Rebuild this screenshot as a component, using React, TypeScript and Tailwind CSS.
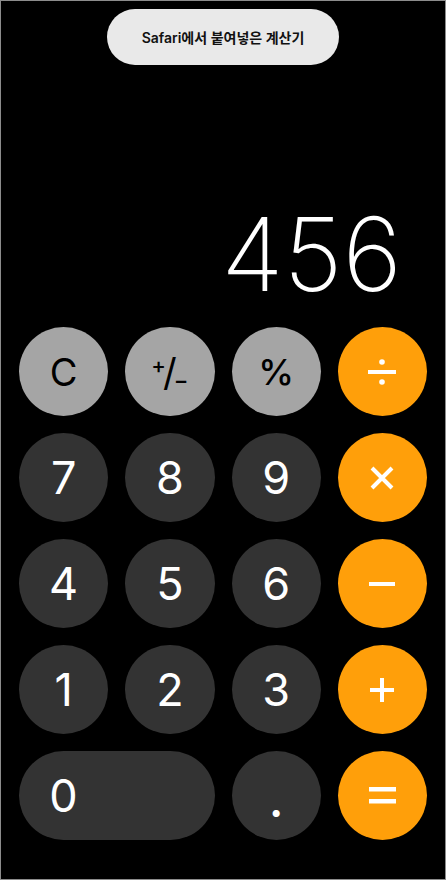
import type { ReactNode } from 'react'

type Kind = 'light' | 'dark' | 'orange'

const kindClass: Record<Kind, string> = {
  light: 'bg-[#a5a5a5] text-black',
  dark: 'bg-[#333333] text-white',
  orange: 'bg-[#ff9f0a] text-white',
}

function Key({ kind, children, wide }: { kind: Kind; children: ReactNode; wide?: boolean }) {
  return (
    <button
      type="button"
      className={`flex h-[89px] items-center rounded-full ${kindClass[kind]} ${
        wide ? 'col-span-2 justify-start' : 'justify-center'
      }`}
    >
      {wide ? <span className="flex w-[89px] justify-center">{children}</span> : children}
    </button>
  )
}

function Digit({ value }: { value: string }) {
  return <span className="text-[45px] leading-none font-normal">{value}</span>
}

// operator glyphs drawn as simple shapes
function Divide() {
  return (
    <svg width="30" height="30" viewBox="0 0 30 30" fill="white">
      <circle cx="15" cy="5" r="2.8" />
      <rect x="1" y="13" width="28" height="4" />
      <circle cx="15" cy="25" r="2.8" />
    </svg>
  )
}

function Times() {
  return (
    <svg width="26" height="26" viewBox="0 0 26 26" stroke="white" strokeWidth="4">
      <path d="M3 3l20 20M23 3L3 23" />
    </svg>
  )
}

function Minus() {
  return (
    <svg width="26" height="4" viewBox="0 0 26 4" fill="white">
      <rect x="0" y="0" width="26" height="4" />
    </svg>
  )
}

function Plus() {
  return (
    <svg width="24" height="24" viewBox="0 0 24 24" fill="white">
      <rect x="0" y="10" width="24" height="4" />
      <rect x="10" y="0" width="4" height="24" />
    </svg>
  )
}

function Equals() {
  return (
    <svg width="27" height="17" viewBox="0 0 27 17" fill="white">
      <rect x="0" y="0" width="27" height="4.5" />
      <rect x="0" y="12" width="27" height="4.5" />
    </svg>
  )
}

function PlusMinus() {
  return (
    <span className="flex h-[30px] items-stretch text-black">
      <span className="mr-[-3px] self-start text-[22px] leading-[16px] font-medium">+</span>
      <span className="text-[38px] leading-[30px] font-normal">/</span>
      <span className="ml-[-3px] self-end text-[22px] leading-[14px] font-medium">−</span>
    </span>
  )
}

export default function App() {
  return (
    <div
      className="flex h-[880px] w-[446px] flex-col border border-[#8c8c8c] bg-black"
      style={{ fontFamily: 'Inter, "Noto Sans CJK KR", sans-serif' }}
    >
      <div className="mx-auto mt-[8px] flex h-[56px] w-[232px] items-center justify-center rounded-full bg-[#e9e9e9]">
        <span className="text-[14px] font-semibold text-[#111]">Safari에서 붙여넣은 계산기</span>
      </div>

      <div className="flex flex-1 items-end justify-end pr-[43px] pb-[22px]">
        <span className="text-[102px] leading-none font-extralight text-white">456</span>
      </div>

      <div className="grid grid-cols-4 gap-[17px] px-[18px] pb-[39px]">
        <Key kind="light">
          <span className="text-[38px] leading-none font-normal">C</span>
        </Key>
        <Key kind="light">
          <PlusMinus />
        </Key>
        <Key kind="light">
          <span className="text-[36px] leading-none font-medium">%</span>
        </Key>
        <Key kind="orange">
          <Divide />
        </Key>

        <Key kind="dark"><Digit value="7" /></Key>
        <Key kind="dark"><Digit value="8" /></Key>
        <Key kind="dark"><Digit value="9" /></Key>
        <Key kind="orange"><Times /></Key>

        <Key kind="dark"><Digit value="4" /></Key>
        <Key kind="dark"><Digit value="5" /></Key>
        <Key kind="dark"><Digit value="6" /></Key>
        <Key kind="orange"><Minus /></Key>

        <Key kind="dark"><Digit value="1" /></Key>
        <Key kind="dark"><Digit value="2" /></Key>
        <Key kind="dark"><Digit value="3" /></Key>
        <Key kind="orange"><Plus /></Key>

        <Key kind="dark" wide><Digit value="0" /></Key>
        <Key kind="dark">
          <span className="pt-[10px] text-[45px] leading-none font-semibold">.</span>
        </Key>
        <Key kind="orange"><Equals /></Key>
      </div>
    </div>
  )
}
